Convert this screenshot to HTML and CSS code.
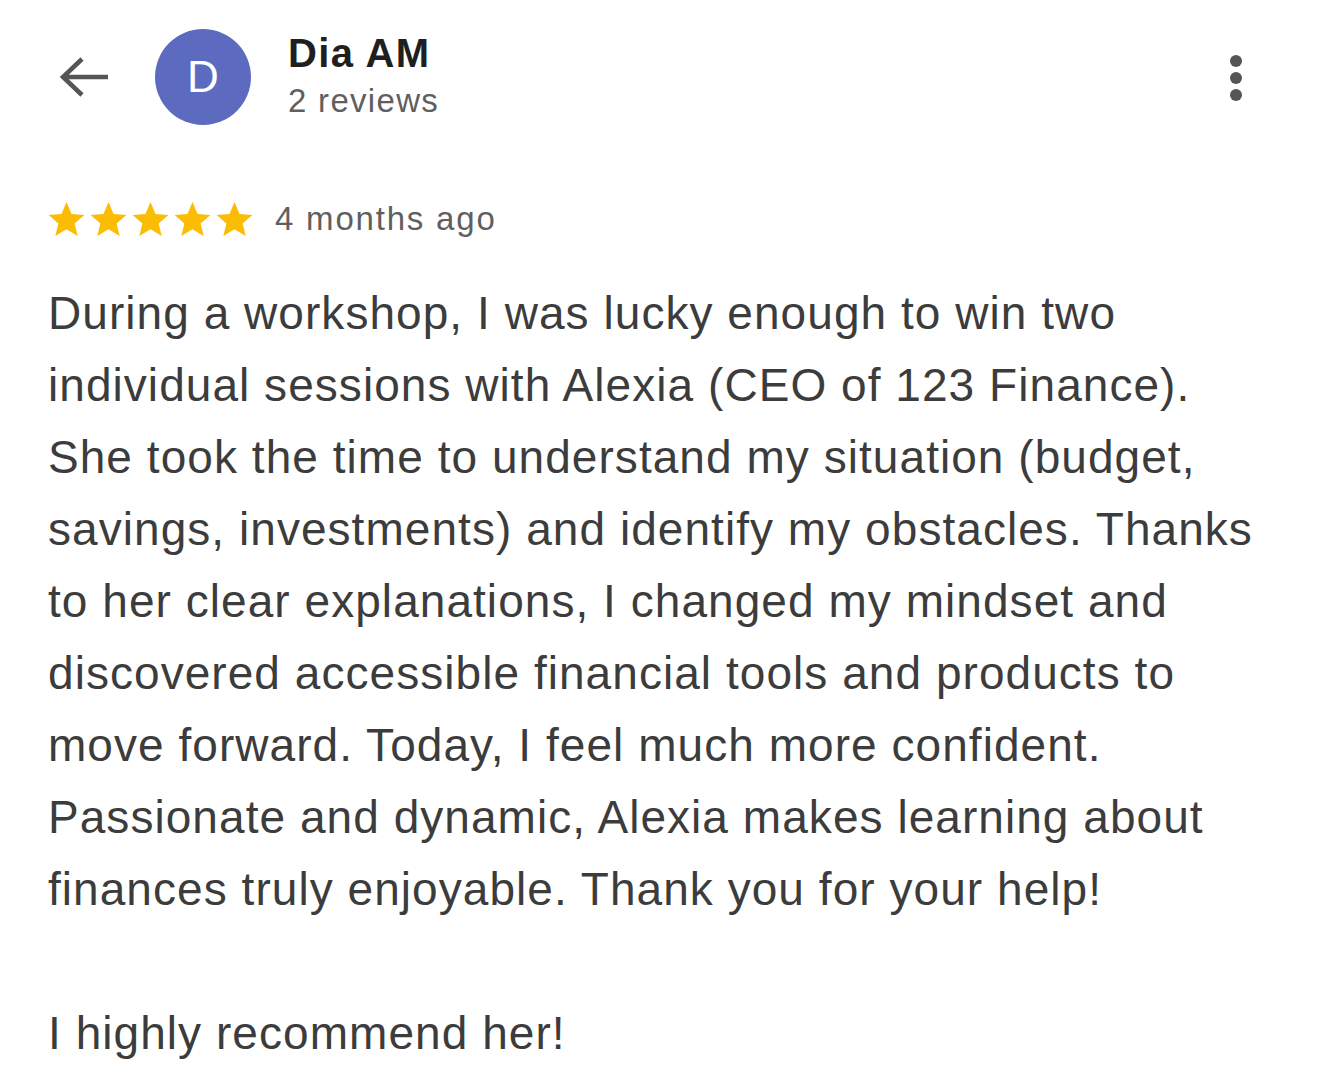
FILE: index.html
```html
<!DOCTYPE html>
<html>
<head>
<meta charset="utf-8">
<link rel="stylesheet" href="styles.css">
</head>
<body>
<div class="page">
  <header class="header">
    <svg class="back" width="52" height="44" viewBox="0 0 52 44"><path d="M50 22H6M24 4L5 22l19 18" fill="none" stroke="#555" stroke-width="4.5" stroke-linecap="butt"/></svg>
    <div class="avatar">D</div>
    <div class="who">
      <div class="name">Dia AM</div>
      <div class="count">2 reviews</div>
    </div>
    <div class="more"><span></span><span></span><span></span></div>
  </header>
  <div class="meta">
    <div class="stars">
      <svg viewBox="0 0 24 24"><path d="M12 1.2l3.1 7.4 7.9.6-6 5.2 1.9 7.8L12 18l-6.9 4.2 1.9-7.8-6-5.2 7.9-.6z"/></svg>
      <svg viewBox="0 0 24 24"><path d="M12 1.2l3.1 7.4 7.9.6-6 5.2 1.9 7.8L12 18l-6.9 4.2 1.9-7.8-6-5.2 7.9-.6z"/></svg>
      <svg viewBox="0 0 24 24"><path d="M12 1.2l3.1 7.4 7.9.6-6 5.2 1.9 7.8L12 18l-6.9 4.2 1.9-7.8-6-5.2 7.9-.6z"/></svg>
      <svg viewBox="0 0 24 24"><path d="M12 1.2l3.1 7.4 7.9.6-6 5.2 1.9 7.8L12 18l-6.9 4.2 1.9-7.8-6-5.2 7.9-.6z"/></svg>
      <svg viewBox="0 0 24 24"><path d="M12 1.2l3.1 7.4 7.9.6-6 5.2 1.9 7.8L12 18l-6.9 4.2 1.9-7.8-6-5.2 7.9-.6z"/></svg>
    </div>
    <span class="ago">4 months ago</span>
  </div>
  <div class="body">
    <p>During a workshop, I was lucky enough to win two<br>individual sessions with Alexia (CEO of 123 Finance).<br>She took the time to understand my situation (budget,<br>savings, investments) and identify my obstacles. Thanks<br>to her clear explanations, I changed my mindset and<br>discovered accessible financial tools and products to<br>move forward. Today, I feel much more confident.<br>Passionate and dynamic, Alexia makes learning about<br>finances truly enjoyable. Thank you for your help!</p>
    <p>I highly recommend her!</p>
  </div>
</div>
</body>
</html>
```
FILE: styles.css
```css
html, body { margin: 0; padding: 0; background: #fff; }
body { font-family: "Liberation Sans", Arial, sans-serif; color: #3c3c3c; }
.page { width: 1320px; height: 1083px; overflow: hidden; }
.header { display: flex; align-items: center; padding: 29px 0 0 58px; height: 96px; }
.back { flex: none; margin-right: 45px; }
.avatar { flex: none; width: 96px; height: 96px; border-radius: 50%; background: #5c6bc0; color: #fff; font-size: 44px; display: flex; align-items: center; justify-content: center; }
.who { margin-left: 37px; display: flex; flex-direction: column; align-self: flex-start; margin-top: 0; }
.name { font-weight: bold; font-size: 40px; letter-spacing: 1.4px; color: #1f1f1f; line-height: 48px; }
.count { font-size: 33px; letter-spacing: 1.3px; color: #5f5f5f; line-height: 44px; margin-top: 2px; }
.more { margin-left: auto; margin-right: 78px; display: flex; flex-direction: column; gap: 5px; align-self: flex-start; margin-top: 26px; }
.more span { width: 12px; height: 12px; border-radius: 50%; background: #555; display: block; }
.meta { display: flex; align-items: center; padding-left: 47px; margin-top: 74px; height: 40px; }
.stars { display: flex; gap: 3px; }
.stars svg { width: 39px; height: 39px; fill: #fbbc04; display: block; }
.ago { font-size: 33px; letter-spacing: 1.8px; color: #5f5f5f; margin-left: 21px; }
.body { padding: 38px 0 0 48px; font-size: 46px; letter-spacing: 1.05px; line-height: 72px; }
.body p { margin: 0 0 72px 0; }
```
